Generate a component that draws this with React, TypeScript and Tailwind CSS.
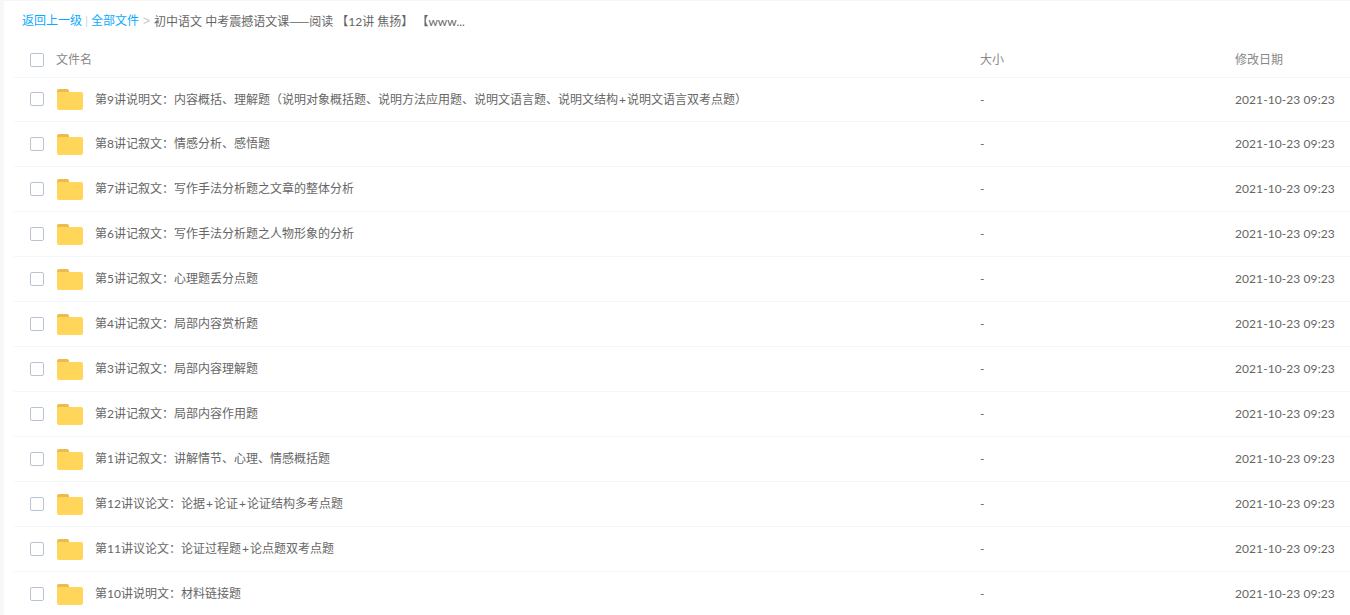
const rows = [
  "第9讲说明文：内容概括、理解题（说明对象概括题、说明方法应用题、说明文语言题、说明文结构+说明文语言双考点题）",
  "第8讲记叙文：情感分析、感悟题",
  "第7讲记叙文：写作手法分析题之文章的整体分析",
  "第6讲记叙文：写作手法分析题之人物形象的分析",
  "第5讲记叙文：心理题丢分点题",
  "第4讲记叙文：局部内容赏析题",
  "第3讲记叙文：局部内容理解题",
  "第2讲记叙文：局部内容作用题",
  "第1讲记叙文：讲解情节、心理、情感概括题",
  "第12讲议论文：论据+论证+论证结构多考点题",
  "第11讲议论文：论证过程题+论点题双考点题",
  "第10讲说明文：材料链接题",
];

function Folder() {
  return (
    <svg width="26" height="21" viewBox="0 0 26 21" className="shrink-0">
      <path d="M0 2a2 2 0 0 1 2-2h8a2 2 0 0 1 2 2v2H0z" fill="#ebbc4d" />
      <path d="M0 4a1 1 0 0 1 1-1h23a2 2 0 0 1 2 2v14a2 2 0 0 1-2 2H2a2 2 0 0 1-2-2z" fill="#ffd659" />
    </svg>
  );
}

function Check() {
  return <span className="block w-[14px] h-[14px] shrink-0 rounded-[2px] border border-[#b8c4d4] bg-white" />;
}

function Name({ text }: { text: string }) {
  const parts = text.split("+");
  return (
    <>
      {parts.map((p, i) => (
        <span key={i}>
          {i > 0 && <span className="mx-[1px]">+</span>}
          {p}
        </span>
      ))}
    </>
  );
}

export default function App() {
  return (
    <div className="h-[615px] overflow-hidden bg-[#f7f7f7] pl-[4px] pt-[1px] font-['Lato','Noto_Sans_CJK_SC',sans-serif] text-[12px]">
      <div className="h-full bg-white pl-[10px]">
        <div className="h-[36px] flex items-center pl-[8px] pt-[4px] text-[#666] leading-none">
          <span className="text-[#09aaff]">返回上一级</span>
          <span className="text-[#c5d8e8] mx-[3px]">|</span>
          <span className="text-[#09aaff]">全部文件</span>
          <span className="text-[#c4c4c4] font-['Liberation_Sans',sans-serif] ml-[4px] mr-[4px]">&gt;</span>
          <span>
            初中语文 中考震撼语文课
            <span className="font-['Noto_Sans_CJK_SC',sans-serif]">——</span>
            阅读 【12讲 焦扬】 【www...
          </span>
        </div>
        <div className="h-[41px] pt-[6px] flex items-center border-b border-[#f2f6fd] text-[#888]">
          <div className="w-[16px]" />
          <Check />
          <span className="ml-[12px] w-[924px]">文件名</span>
          <span className="w-[255px]">大小</span>
          <span>修改日期</span>
        </div>
        {rows.map((r, i) => (
          <div
            key={r}
            className={
              i === 0
                ? "h-[44px] flex items-center border-b border-[#f2f6fd] text-[#666]"
                : "h-[45px] flex items-center border-b border-[#f2f6fd] text-[#666]"
            }
          >
            <div className="w-[16px]" />
            <div className="-mt-[1px]"><Check /></div>
            <div className="ml-[13px]"><Folder /></div>
            <span className="ml-[12px] w-[885px] truncate"><Name text={r} /></span>
            <span className="w-[255px]">-</span>
            <span className="whitespace-nowrap tracking-[0.08px]">2021-10-23 09:23</span>
          </div>
        ))}
      </div>
    </div>
  );
}
